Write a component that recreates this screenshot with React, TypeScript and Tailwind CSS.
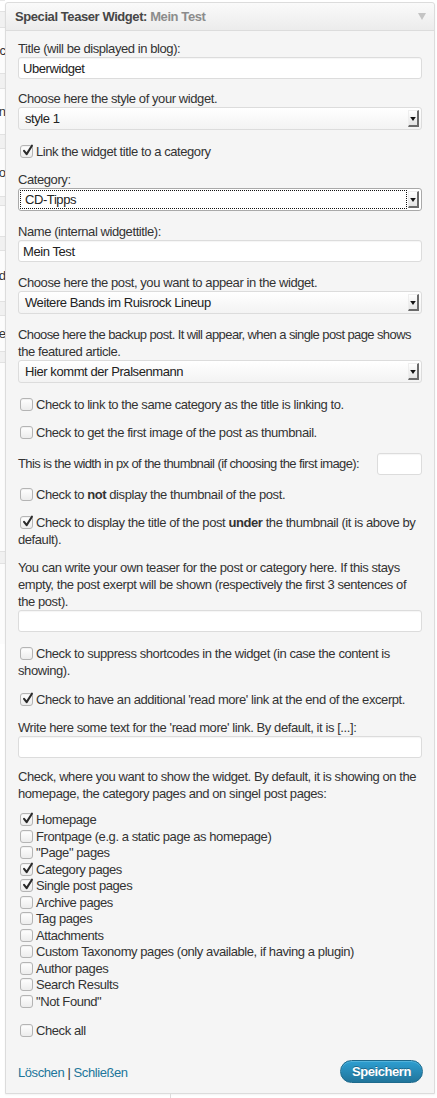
import React from "react";

const font = "font-['Liberation_Sans','Helvetica',Arial,sans-serif]";

function Check({ checked = false }: { checked?: boolean }) {
  return (
    <span className="relative inline-block align-[-2px] ml-[2px] mr-[3px] w-[13px] h-[13px] rounded-[3px] border border-[#b4b4b4] bg-gradient-to-b from-white to-[#ececec] shadow-[inset_0_1px_1px_rgba(0,0,0,0.06)]">
      {checked && (
        <svg
          viewBox="0 0 14 14"
          className="absolute left-[1px] top-[-2px] w-[12px] h-[13px]"
        >
          <path
            d="M2.4 7.4 L5.4 11.2 L11.6 1.4"
            fill="none"
            stroke="#2a2a2a"
            strokeWidth="2.4"
            strokeLinecap="round"
            strokeLinejoin="round"
          />
        </svg>
      )}
    </span>
  );
}

function TextInput({ value = "", className = "" }: { value?: string; className?: string }) {
  return (
    <div
      className={`h-[22px] rounded-[3px] border border-[#dcdcdc] bg-white pl-[4px] flex items-center text-[#222] shadow-[inset_0_1px_1px_rgba(0,0,0,0.04)] ${className}`}
    >
      {value}
    </div>
  );
}

function Arrow() {
  return (
    <div className="w-[11px] h-[17px] mr-[2px] flex items-center justify-center bg-gradient-to-b from-white to-[#e4e4e4] border-r-2 border-b-2 border-[#6a6a6a] border-t border-l border-t-[#eee] border-l-[#eee]">
      <svg viewBox="0 0 7 5" className="w-[6px] h-[4px] mt-[2px]">
        <path d="M0 0 H7 L3.5 5 Z" fill="#111" />
      </svg>
    </div>
  );
}

function Select({ value, focused = false }: { value: string; focused?: boolean }) {
  return (
    <div
      className={`h-[23px] rounded-[3px] border flex items-center text-[#222] ${
        focused
          ? "border-[#a9a9a9] bg-white"
          : "border-[#dcdcdc] bg-gradient-to-b from-white to-[#f3f3f3]"
      }`}
    >
      <div
        className={`flex-1 self-stretch flex items-center ${
          focused ? "m-[1px] border border-dotted border-[#111] pl-[4px]" : "pl-[6px]"
        }`}
      >
        {value}
      </div>
      <Arrow />
    </div>
  );
}

const pages: [string, boolean][] = [
  ["Homepage", true],
  ["Frontpage (e.g. a static page as homepage)", false],
  ['"Page" pages', false],
  ["Category pages", true],
  ["Single post pages", true],
  ["Archive pages", false],
  ["Tag pages", false],
  ["Attachments", false],
  ["Custom Taxonomy pages (only available, if having a plugin)", false],
  ["Author pages", false],
  ["Search Results", false],
  ['"Not Found"', false],
];

const behind: { band: number; body: number; word: string }[] = [
  { band: 17, body: 45, word: "Sync" },
  { band: 16, body: 45, word: "Admin" },
  { band: 15, body: 47, word: "Info" },
  { band: 10, body: 30, word: "" },
  { band: 15, body: 50, word: "Wordd" },
  { band: 15, body: 35, word: "Ve" },
  { band: 12, body: 188, word: "" },
  { band: 13, body: 80, word: "" },
];

export default function App() {
  return (
    <div className={`w-[437px] h-[1098px] overflow-hidden bg-white flex ${font}`}>
      {/* widget list behind the panel */}
      <div className="w-[5px] shrink-0 overflow-hidden flex flex-col pt-[10px] border-t border-[#e8e8e8]">
        {behind.map((b, i) => (
          <div key={i} className="flex flex-col">
            <div
              className="bg-[#f1f1f1] border-y border-[#e2e2e2]"
              style={{ height: b.band }}
            />
            <div
              className="flex justify-end items-center bg-[#fcfcfc] text-[13px] text-[#333] whitespace-nowrap"
              style={{ height: b.body }}
            >
              <span className="mr-[-1px]">{b.word}</span>
            </div>
          </div>
        ))}
      </div>

      <div className="w-[430px] shrink-0 flex flex-col">
        <div className="mt-[2px] rounded-t-[3px] border border-[#dcdcdc] bg-[#f5f5f5] shadow-[0_1px_2px_rgba(0,0,0,0.05)] text-[13px] leading-[17px] tracking-[-0.42px] text-[#333]">
          <div className="h-[28px] border-b border-[#dcdcdc] bg-gradient-to-b from-[#fafafa] to-[#ececec] flex items-center justify-between pl-[9px] pr-[8px] rounded-t-[3px]">
            <div className="font-bold text-[#464646]">
              Special Teaser Widget: <span className="text-[#8c8c8c]">Mein Test</span>
            </div>
            <svg viewBox="0 0 8 7" className="w-[8px] h-[7px]">
              <path d="M0 0 H8 L4 7 Z" fill="#c4c4c4" />
            </svg>
          </div>

          <div className="px-[12px] pt-[9px] pb-[10px] flex flex-col">
            <div>Title (will be displayed in blog):</div>
            <TextInput value="Uberwidget" />

            <div className="mt-[11px]">Choose here the style of your widget.</div>
            <Select value="style 1" />

            <div className="mt-[13px]">
              <Check checked />
              Link the widget title to a category
            </div>

            <div className="mt-[11px]">Category:</div>
            <Select value="CD-Tipps" focused />

            <div className="mt-[12px]">Name (internal widgettitle):</div>
            <TextInput value="Mein Test" />

            <div className="mt-[12px]">Choose here the post, you want to appear in the widget.</div>
            <Select value="Weitere Bands im Ruisrock Lineup" />

            <div className="mt-[12px]">
              <div className="whitespace-nowrap tracking-[-0.6px]">
                Choose here the backup post. It will appear, when a single post page shows
              </div>
              <div>the featured article.</div>
            </div>
            <Select value="Hier kommt der Pralsenmann" />

            <div className="mt-[13px]">
              <Check />
              Check to link to the same category as the title is linking to.
            </div>

            <div className="mt-[11px]">
              <Check />
              Check to get the first image of the post as thumbnail.
            </div>

            <div className="mt-[12px] h-[21px] flex items-center">
              <span className="whitespace-nowrap tracking-[-0.6px]">
                This is the width in px of the thumbnail (if choosing the first image):
              </span>
              <TextInput className="ml-auto w-[45px] h-[21px] shrink-0" />
            </div>

            <div className="mt-[12px]">
              <Check />
              Check to <b>not</b> display the thumbnail of the post.
            </div>

            <div className="mt-[11px]">
              <Check checked />
              Check to display the title of the post <b>under</b> the thumbnail (it is above by
              default).
            </div>

            <div className="mt-[11px]">
              You can write your own teaser for the post or category here. If this stays empty, the
              post exerpt will be shown (respectively the first 3 sentences of the post).
            </div>
            <TextInput />

            <div className="mt-[13px]">
              <Check />
              Check to suppress shortcodes in the widget (in case the content is showing).
            </div>

            <div className="mt-[12px]">
              <Check checked />
              Check to have an additional 'read more' link at the end of the excerpt.
            </div>

            <div className="mt-[11px]">
              Write here some text for the 'read more' link. By default, it is [...]:
            </div>
            <TextInput className="h-[21px]" />

            <div className="mt-[10px]">
              Check, where you want to show the widget. By default, it is showing on the homepage,
              the category pages and on singel post pages:
            </div>

            <ul className="mt-[10px] flex flex-col">
              {pages.map(([label, on]) => (
                <li key={label} className="h-[16.5px] leading-[16.5px] whitespace-nowrap">
                  <Check checked={on} />
                  {label}
                </li>
              ))}
            </ul>

            <div className="mt-[12px]">
              <Check />
              Check all
            </div>

            <div className="mt-[21px] h-[23px] flex items-center justify-between">
              <div className="pt-[2px]">
                <a className="text-[#21759b]">Löschen</a>
                <span className="text-[#333]"> | </span>
                <a className="text-[#21759b]">Schließen</a>
              </div>
              <button className="h-[23px] w-[83px] mr-[-1px] rounded-full border border-[#1e6a8d] bg-gradient-to-b from-[#2e9fd2] to-[#21759b] text-white font-bold [text-shadow:0_-1px_0_rgba(0,0,0,0.3)] shadow-[inset_0_1px_0_rgba(120,200,230,0.5)]">
                Speichern
              </button>
            </div>
          </div>
        </div>
        <div className="flex-1 ml-[165px] border-l border-[#dcdcdc]" />
      </div>
    </div>
  );
}
